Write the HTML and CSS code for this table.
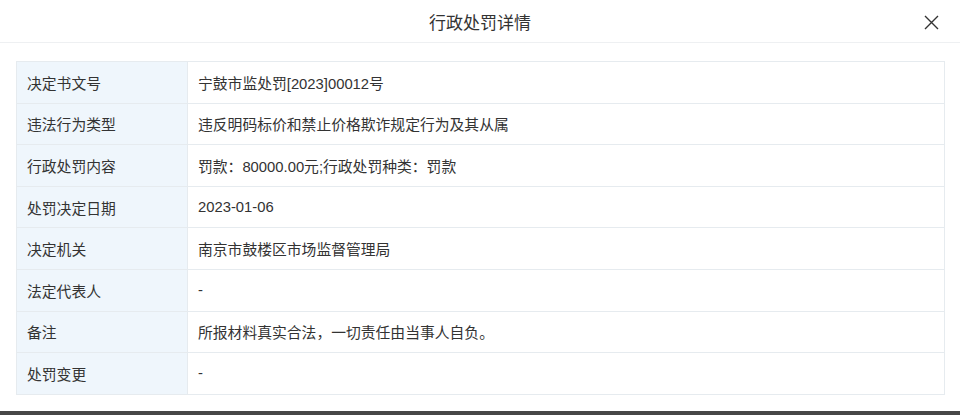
FILE: index.html
```html
<!DOCTYPE html>
<html lang="zh">

<head>
    <meta charset="UTF-8">
    <title>行政处罚详情</title>
    <link rel="stylesheet" href="styles.css">
</head>

<body>
    <div class="modal">
        <header class="modal-header">
            <h1>行政处罚详情</h1>
            <span class="close-btn">
                <svg width="15" height="15" viewBox="0 0 15 15">
                    <path d="M1 1 L14 14 M14 1 L1 14" stroke="#333" stroke-width="1.4" fill="none" />
                </svg>
            </span>
        </header>

        <div class="modal-body">
            <table class="detail-table">
                <tr>
                    <td class="label">决定书文号</td>
                    <td>宁鼓市监处罚[2023]00012号</td>
                </tr>
                <tr>
                    <td class="label">违法行为类型</td>
                    <td>违反明码标价和禁止价格欺诈规定行为及其从属</td>
                </tr>
                <tr>
                    <td class="label">行政处罚内容</td>
                    <td>罚款：80000.00元;行政处罚种类：罚款</td>
                </tr>
                <tr>
                    <td class="label">处罚决定日期</td>
                    <td>2023-01-06</td>
                </tr>
                <tr>
                    <td class="label">决定机关</td>
                    <td>南京市鼓楼区市场监督管理局</td>
                </tr>
                <tr>
                    <td class="label">法定代表人</td>
                    <td>-</td>
                </tr>
                <tr>
                    <td class="label">备注</td>
                    <td>所报材料真实合法，一切责任由当事人自负。</td>
                </tr>
                <tr>
                    <td class="label">处罚变更</td>
                    <td>-</td>
                </tr>
            </table>
        </div>
    </div>
    <div class="page-bottom"></div>
</body>

</html>
```

FILE: styles.css
```css
body,
html {
    margin: 0;
    padding: 0;
    height: 100%;
    font-family: "Liberation Sans", "Noto Sans CJK SC", sans-serif;
    background-color: #fff;
    color: #333;
    overflow: hidden;
}

.modal {
    height: 411px;
    background-color: #fff;
}

.modal-header {
    position: relative;
    height: 42px;
    border-bottom: 1px solid #eef0f2;
    display: flex;
    align-items: center;
    justify-content: center;
}

.modal-header h1 {
    margin: 0;
    font-size: 17px;
    font-weight: normal;
    color: #333;
}

/* botão de fechar no canto */
.close-btn {
    position: absolute;
    right: 21px;
    top: 15px;
    width: 15px;
    height: 15px;
}

.close-btn svg {
    display: block;
}

.modal-body {
    padding: 18px 15px 0 16px;
}

.detail-table {
    width: 100%;
    border-collapse: collapse;
    font-size: 14.8px;
    color: #333;
}

.detail-table td {
    height: 41.6px;
    padding: 0 10px;
    border: 1px solid #e6ebef;
    box-sizing: border-box;
    vertical-align: middle;
}

.detail-table td.label {
    width: 171px;
    background-color: #eff6fc;
}

.page-bottom {
    height: 4px;
    background-color: #474747;
}
```
